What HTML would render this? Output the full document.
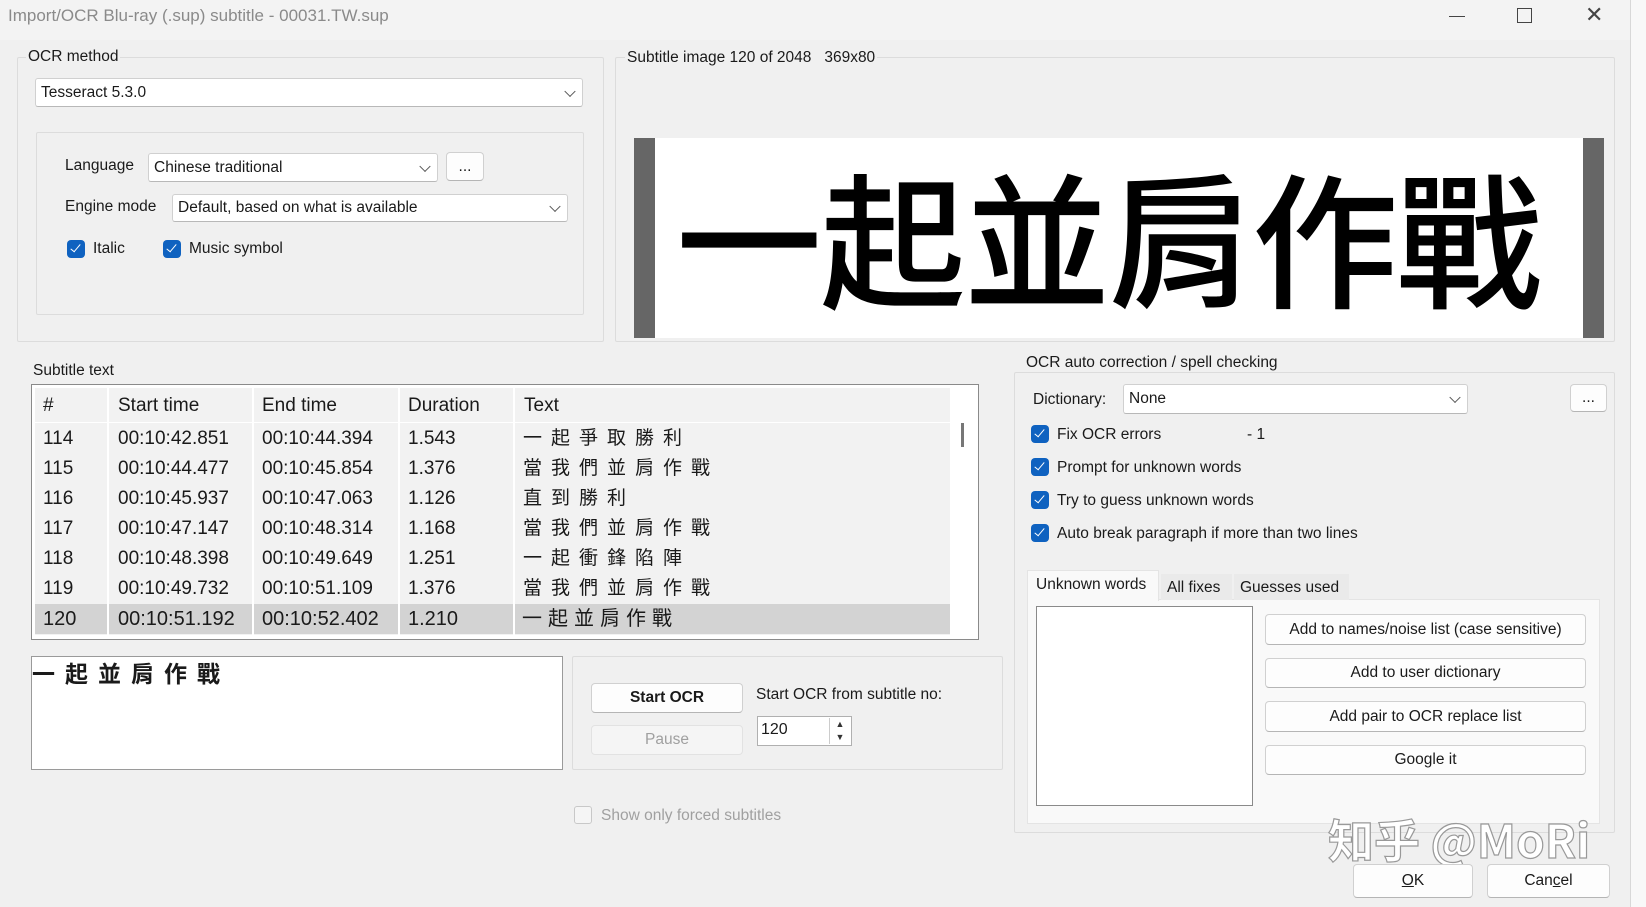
<!DOCTYPE html>
<html><head><meta charset="utf-8"><style>
*{box-sizing:border-box;margin:0;padding:0}
body{width:1646px;height:907px;background:#f0f0f0;font-family:"Liberation Sans","Noto Sans CJK TC",sans-serif;font-size:15.5px;color:#1a1a1a;position:relative;overflow:hidden}
.a{position:absolute}
.grp{position:absolute;border:1px solid #dcdcdc;border-radius:2px}
.lbl{position:absolute;background:#f0f0f0;padding:0 2px;white-space:nowrap}
.cb{position:absolute;background:#fff;border:1px solid #d0d0d0;border-bottom-color:#b8b8b8;border-radius:3px;padding-left:5px;white-space:nowrap;display:flex;align-items:center}
.cb .ar{position:absolute;right:8px;top:50%;width:8px;height:8px;border-right:1.4px solid #555;border-bottom:1.4px solid #555;transform:translateY(-70%) rotate(45deg)}
.btn{position:absolute;background:#fdfdfd;border:1px solid #d0d0d0;border-bottom-color:#b5b5b5;border-radius:4px;display:flex;align-items:center;justify-content:center;white-space:nowrap}
.chk{position:absolute;width:18px;height:18px;background:#0f62c0;border-radius:4px}
.chk:after{content:"";position:absolute;left:6px;top:2px;width:4px;height:9px;border-right:1.6px solid #fff;border-bottom:1.6px solid #fff;transform:rotate(40deg)}
.ct{position:absolute;white-space:nowrap}
.row{position:absolute;left:0;width:919px;height:30px;font-size:19px;line-height:30px;white-space:nowrap}
.row span{position:absolute}
.sep{position:absolute;top:0;bottom:0;width:2px;background:#fff}
.cj{letter-spacing:9px}
</style></head><body>
<div class="a" style="left:0;top:0;width:1646px;height:40px;background:#f3f3f3"></div>
<div class="a" style="left:8px;top:6px;font-size:17px;color:#8a8a8a">Import/OCR Blu-ray (.sup) subtitle - 00031.TW.sup</div>
<div class="a" style="left:1449px;top:16px;width:16px;height:1px;background:#444"></div>
<div class="a" style="left:1517px;top:8px;width:15px;height:15px;border:1px solid #444"></div>
<div class="a" style="left:1585px;top:2px;font-size:22px;color:#444;font-weight:300">✕</div>
<div class="a" style="left:1630px;top:0;width:16px;height:907px;background:#f8f8f8;border-left:1px solid #d8d8d8"></div>

<div class="grp" style="left:17px;top:57px;width:587px;height:285px"></div>
<div class="lbl" style="left:26px;top:48px">OCR method</div>
<div class="cb" style="left:35px;top:78px;width:548px;height:29px">Tesseract 5.3.0<div class="ar"></div></div>
<div class="grp" style="left:36px;top:132px;width:548px;height:183px"></div>
<div class="ct" style="left:65px;top:157px">Language</div>
<div class="cb" style="left:148px;top:153px;width:290px;height:29px">Chinese traditional<div class="ar"></div></div>
<div class="btn" style="left:446px;top:152px;width:38px;height:29px">...</div>
<div class="ct" style="left:65px;top:198px">Engine mode</div>
<div class="cb" style="left:172px;top:194px;width:396px;height:28px">Default, based on what is available<div class="ar"></div></div>
<div class="chk" style="left:67px;top:240px"></div><div class="ct" style="left:93px;top:240px">Italic</div>
<div class="chk" style="left:163px;top:240px"></div><div class="ct" style="left:189px;top:240px">Music symbol</div>

<div class="grp" style="left:615px;top:57px;width:1000px;height:285px"></div>
<div class="lbl" style="left:625px;top:49px">Subtitle image 120 of 2048 &nbsp; 369x80</div>
<div class="a" style="left:634px;top:138px;width:970px;height:200px;background:#fff;border-left:21px solid #666;border-right:21px solid #666"></div>
<div class="a" style="left:676px;top:150px;font-size:146px;line-height:170px;font-weight:500;color:#000;letter-spacing:-2px;font-family:'Noto Sans CJK TC',sans-serif;white-space:nowrap">一起並肩作戰</div>

<div class="ct" style="left:33px;top:362px">Subtitle text</div>
<div class="a" style="left:31px;top:384px;width:948px;height:256px;background:#fff;border:1px solid #8a8a8a"></div>
<div class="a" style="left:35px;top:388px;width:915px;height:247px;background:#f2f2f2">
 <div class="row" style="top:1px;height:34px;line-height:34px;font-size:19px"><span style="left:8px">#</span><span style="left:83px">Start time</span><span style="left:227px">End time</span><span style="left:373px">Duration</span><span style="left:489px">Text</span></div>
 <div class="row" style="top:36px"><span style="left:8px">114</span><span style="left:83px">00:10:42.851</span><span style="left:227px">00:10:44.394</span><span style="left:373px">1.543</span><span class="cj" style="left:488px">一起爭取勝利</span></div>
 <div class="row" style="top:66px"><span style="left:8px">115</span><span style="left:83px">00:10:44.477</span><span style="left:227px">00:10:45.854</span><span style="left:373px">1.376</span><span class="cj" style="left:488px">當我們並肩作戰</span></div>
 <div class="row" style="top:96px"><span style="left:8px">116</span><span style="left:83px">00:10:45.937</span><span style="left:227px">00:10:47.063</span><span style="left:373px">1.126</span><span class="cj" style="left:488px">直到勝利</span></div>
 <div class="row" style="top:126px"><span style="left:8px">117</span><span style="left:83px">00:10:47.147</span><span style="left:227px">00:10:48.314</span><span style="left:373px">1.168</span><span class="cj" style="left:488px">當我們並肩作戰</span></div>
 <div class="row" style="top:156px"><span style="left:8px">118</span><span style="left:83px">00:10:48.398</span><span style="left:227px">00:10:49.649</span><span style="left:373px">1.251</span><span class="cj" style="left:488px">一起衝鋒陷陣</span></div>
 <div class="row" style="top:186px"><span style="left:8px">119</span><span style="left:83px">00:10:49.732</span><span style="left:227px">00:10:51.109</span><span style="left:373px">1.376</span><span class="cj" style="left:488px">當我們並肩作戰</span></div>
 <div class="row" style="top:216px;background:#d3d3d3;width:915px;font-size:20px"><span style="left:8px">120</span><span style="left:83px">00:10:51.192</span><span style="left:227px">00:10:52.402</span><span style="left:373px">1.210</span><span style="left:487px;letter-spacing:6px">一起並肩作戰</span></div>
 <div class="sep" style="left:72px"></div><div class="sep" style="left:217px"></div><div class="sep" style="left:363px"></div><div class="sep" style="left:478px"></div>
 <div class="a" style="left:0;top:34px;width:915px;height:1px;background:#fff"></div>
</div>
<div class="a" style="left:961px;top:423px;width:3px;height:24px;background:#777"></div>

<div class="a" style="left:31px;top:656px;width:532px;height:114px;background:#fff;border:1px solid #9a9a9a"></div>
<div class="a" style="left:32px;top:655px;font-size:23px;font-weight:bold;letter-spacing:10px;font-family:'Noto Sans CJK TC',sans-serif">一起並肩作戰</div>

<div class="grp" style="left:572px;top:656px;width:431px;height:114px"></div>
<div class="btn" style="left:591px;top:683px;width:152px;height:30px;font-weight:bold">Start OCR</div>
<div class="btn" style="left:591px;top:725px;width:152px;height:30px;color:#a0a0a0;background:#f5f5f5;border-color:#e2e2e2">Pause</div>
<div class="ct" style="left:756px;top:686px">Start OCR from subtitle no:</div>
<div class="a" style="left:757px;top:716px;width:95px;height:30px;background:#fff;border:1px solid #b0b0b0;padding:4px 3px;font-size:16px">120</div>
<div class="a" style="left:829px;top:718px;width:21px;height:26px;border-left:1px solid #ccc;font-size:9px;line-height:13px;text-align:center;color:#333">▲<br>▼</div>
<div class="a" style="left:574px;top:806px;width:18px;height:18px;border:1px solid #c8c8c8;border-radius:3px;background:#f5f5f5"></div>
<div class="ct" style="left:601px;top:807px;color:#a0a0a0">Show only forced subtitles</div>

<div class="grp" style="left:1014px;top:372px;width:601px;height:461px"></div>
<div class="lbl" style="left:1024px;top:354px">OCR auto correction / spell checking</div>
<div class="ct" style="left:1033px;top:391px">Dictionary:</div>
<div class="cb" style="left:1123px;top:384px;width:345px;height:30px">None<div class="ar"></div></div>
<div class="btn" style="left:1570px;top:384px;width:37px;height:28px">...</div>
<div class="chk" style="left:1031px;top:425px"></div><div class="ct" style="left:1057px;top:426px">Fix OCR errors</div><div class="ct" style="left:1247px;top:426px">- 1</div>
<div class="chk" style="left:1031px;top:458px"></div><div class="ct" style="left:1057px;top:459px">Prompt for unknown words</div>
<div class="chk" style="left:1031px;top:491px"></div><div class="ct" style="left:1057px;top:492px">Try to guess unknown words</div>
<div class="chk" style="left:1031px;top:524px"></div><div class="ct" style="left:1057px;top:525px">Auto break paragraph if more than two lines</div>
<div class="a" style="left:1027px;top:599px;width:573px;height:225px;background:#f9f9f9;border:1px solid #e4e4e4"></div>
<div class="a" style="left:1027px;top:570px;width:132px;height:31px;background:#f9f9f9;border:1px solid #e4e4e4;border-bottom:none;padding:5px 8px;white-space:nowrap">Unknown words</div>
<div class="a" style="left:1161px;top:574px;width:71px;height:26px;background:#eaeaea;padding:5px 6px;white-space:nowrap">All fixes</div>
<div class="a" style="left:1234px;top:574px;width:115px;height:26px;background:#eaeaea;padding:5px 6px;white-space:nowrap">Guesses used</div>
<div class="a" style="left:1036px;top:606px;width:217px;height:200px;background:#fff;border:1px solid #8a8a8a"></div>
<div class="btn" style="left:1265px;top:614px;width:321px;height:31px">Add to names/noise list (case sensitive)</div>
<div class="btn" style="left:1265px;top:658px;width:321px;height:30px">Add to user dictionary</div>
<div class="btn" style="left:1265px;top:701px;width:321px;height:31px">Add pair to OCR replace list</div>
<div class="btn" style="left:1265px;top:745px;width:321px;height:30px">Google it</div>

<div class="a" style="left:1328px;top:806px;font-size:46px;font-weight:bold;color:#fff;-webkit-text-stroke:1.2px #999;white-space:nowrap;font-family:'Noto Sans CJK SC',sans-serif">知乎 @MoRi</div>
<div class="btn" style="left:1353px;top:864px;width:120px;height:34px"><u>O</u>K</div>
<div class="btn" style="left:1487px;top:864px;width:123px;height:34px">Can<u>c</u>el</div>
</body></html>
